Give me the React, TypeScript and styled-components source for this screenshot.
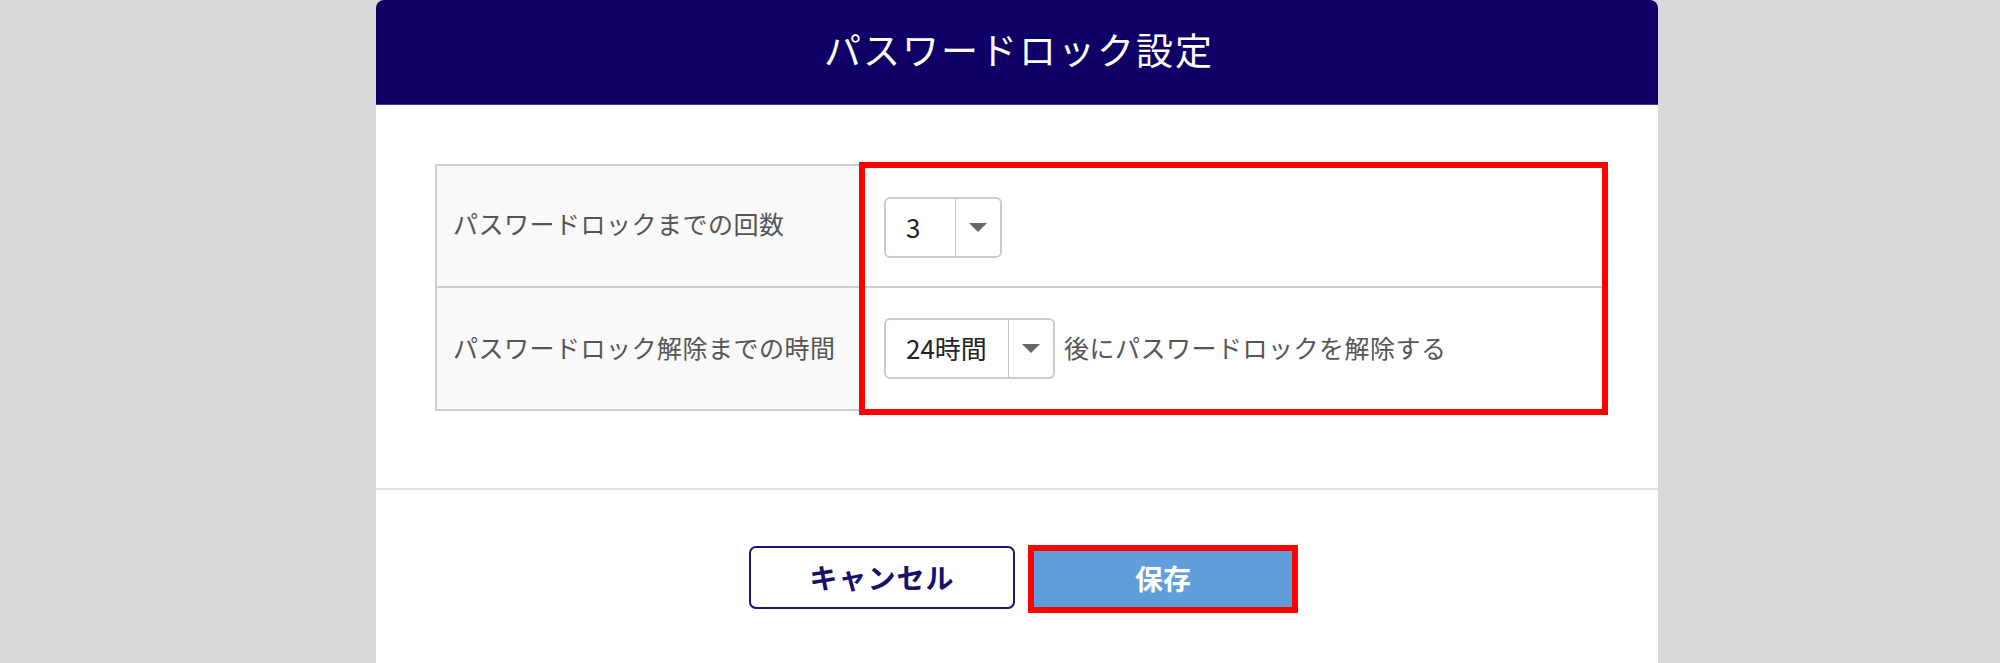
import styled, { createGlobalStyle } from "styled-components";

const GlobalStyle = createGlobalStyle`
  html, body {
    margin: 0;
    padding: 0;
    background: #d9d9d9;
    font-family: "Noto Sans CJK JP", "Noto Sans", sans-serif;
  }
  * { box-sizing: border-box; }
`;

const Page = styled.div`
  width: 2000px;
  height: 663px;
  overflow: hidden;
`;

const Modal = styled.div`
  width: 1282px;
  height: 670px;
  margin-left: 376px;
  background: #fff;
  border-radius: 8px;
  overflow: hidden;
  display: flex;
  flex-direction: column;
`;

const Header = styled.div`
  height: 105px;
  padding-bottom: 5px;
  background: #0f0066;
  border-bottom: 1px solid #3e3796;
  display: flex;
  align-items: center;
  justify-content: center;
`;

const Title = styled.h1`
  margin: 0;
  color: #fff;
  font-size: 37px;
  font-weight: 400;
  letter-spacing: 2px;
  line-height: 1;
  padding-left: 4px;
`;

const Body = styled.div`
  padding: 59px 50px 73px 59px;
  border-bottom: 2px solid #e3e3e3;
`;

const Table = styled.div`
  display: flex;
  align-items: flex-start;
`;

const LabelCol = styled.div`
  width: 424px;
  display: flex;
  flex-direction: column;
  border: 2px solid #cdcdcd;
  border-right: none;
  background: #f9f9f9;
`;

const LabelCell = styled.div<{ $h: number; $divider?: boolean }>`
  height: ${(p) => p.$h}px;
  display: flex;
  align-items: center;
  padding: 0 0 ${(p) => (p.$divider ? 3 : 6)}px 16px;
  color: #555;
  font-size: 25px;
  letter-spacing: 0.5px;
  border-top: ${(p) => (p.$divider ? "2px solid #cdcdcd" : "none")};
`;

const ValueCol = styled.div`
  flex: 1;
  margin-top: -2px;
  border: 6px solid #ff0000;
  display: flex;
  flex-direction: column;
`;

const ValueCell = styled.div<{ $h: number; $divider?: boolean }>`
  height: ${(p) => p.$h}px;
  display: flex;
  align-items: center;
  padding-left: 19px;
  gap: 9px;
  border-top: ${(p) => (p.$divider ? "2px solid #cdcdcd" : "none")};
`;

const Select = styled.div`
  height: 61px;
  display: inline-flex;
  align-items: stretch;
  border: 2px solid #cbcbcb;
  border-radius: 6px;
  background: #fff;
`;

const SelectValue = styled.div<{ $w: number }>`
  width: ${(p) => p.$w}px;
  padding: 0 0 2px 20px;
  display: flex;
  align-items: center;
  color: #222;
  font-size: 26px;
`;

const SelectArrow = styled.div`
  width: 45px;
  border-left: 1px solid #c4c4c4;
  display: flex;
  align-items: center;
  justify-content: center;
`;

const Suffix = styled.span`
  color: #555;
  font-size: 25px;
  letter-spacing: 0.5px;
  padding-bottom: 3px;
`;

const Footer = styled.div`
  padding: 55px 0 0 13px;
  display: flex;
  justify-content: center;
  align-items: flex-start;
  gap: 13px;
`;

const CancelButton = styled.button`
  width: 266px;
  height: 63px;
  margin-top: 1px;
  padding-bottom: 3px;
  border: 2px solid #1a1475;
  border-radius: 7px;
  background: #fff;
  color: #16106a;
  font-family: inherit;
  font-size: 28px;
  font-weight: 700;
  letter-spacing: 1px;
  cursor: pointer;
`;

const Highlight = styled.div`
  border: 6px solid #ff0000;
`;

const SaveButton = styled.button`
  display: block;
  width: 258px;
  height: 56px;
  padding-bottom: 3px;
  border: none;
  background: #5f9ddb;
  color: #fff;
  font-family: inherit;
  font-size: 28px;
  font-weight: 700;
  cursor: pointer;
`;

const Caret = () => (
  <svg width="18" height="9" viewBox="0 0 18 9">
    <path d="M0 0 H18 L9 9 Z" fill="#666" />
  </svg>
);

export default function App() {
  return (
    <>
      <GlobalStyle />
      <Page>
        <Modal>
          <Header>
            <Title>パスワードロック設定</Title>
          </Header>
          <Body>
            <Table>
              <LabelCol>
                <LabelCell $h={120}>パスワードロックまでの回数</LabelCell>
                <LabelCell $h={123} $divider>
                  パスワードロック解除までの時間
                </LabelCell>
              </LabelCol>
              <ValueCol>
                <ValueCell $h={118}>
                  <Select>
                    <SelectValue $w={69}>3</SelectValue>
                    <SelectArrow>
                      <Caret />
                    </SelectArrow>
                  </Select>
                </ValueCell>
                <ValueCell $h={123} $divider>
                  <Select>
                    <SelectValue $w={122}>24時間</SelectValue>
                    <SelectArrow>
                      <Caret />
                    </SelectArrow>
                  </Select>
                  <Suffix>後にパスワードロックを解除する</Suffix>
                </ValueCell>
              </ValueCol>
            </Table>
          </Body>
          <Footer>
            <CancelButton>キャンセル</CancelButton>
            <Highlight>
              <SaveButton>保存</SaveButton>
            </Highlight>
          </Footer>
        </Modal>
      </Page>
    </>
  );
}
